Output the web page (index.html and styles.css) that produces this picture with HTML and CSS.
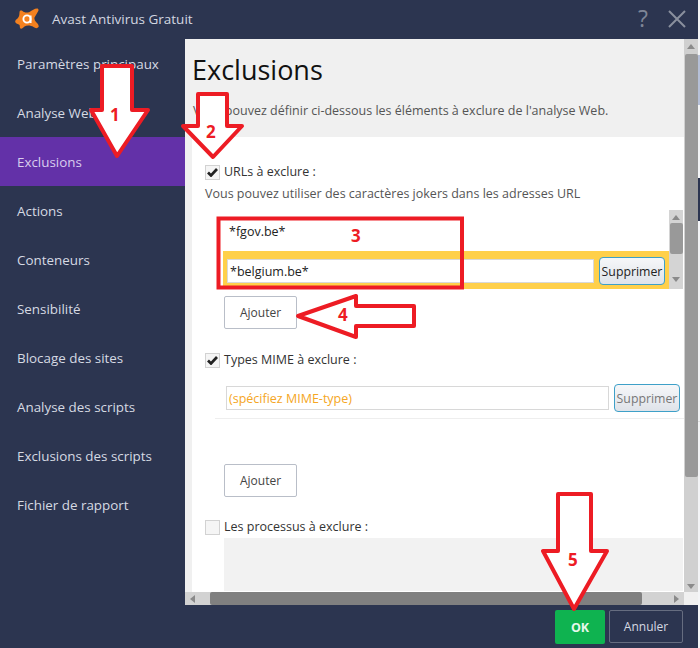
FILE: index.html
```html
<!DOCTYPE html>
<html lang="fr">
<head>
<meta charset="utf-8">
<title>Avast Antivirus Gratuit</title>
<link rel="stylesheet" href="styles.css">
</head>
<body>
<div class="page">
  <div class="app">
    <header class="titlebar">
      <svg class="logo" width="24" height="24" viewBox="0 0 24 24"><path fill="#f4811f" d="M22 1.500C23.500 1.500 24 3 23 4.500L19.500 10.500C19 12 20 14 21.500 15.500C23.500 17.500 24 19 23.500 20C22.500 21.500 20.500 21.500 18.500 20C16 18.500 12 18 9.500 19.500C8 21 6.500 22.500 5.500 21.500C4.500 20.500 5 19 4.500 18C4 17 1.500 17 0.500 15.500C-0.500 14 1 12.500 2.500 11.500C4 10 4.500 8 4.500 5.500C4.500 3.500 6 3 7.500 4C9 5.500 11.500 6 14.500 5C17 3.500 19.500 1.500 22 1.500Z"/><circle cx="12" cy="12" r="3.600" fill="none" stroke="#fff" stroke-width="1.900"/><path d="M15.600 8.500V16" stroke="#fff" stroke-width="1.900"/></svg>
      <span class="apptitle">Avast Antivirus Gratuit</span>
      <span class="help">?</span>
      <svg class="close" width="18" height="18" viewBox="0 0 18 18"><path d="M1 1L17 17M17 1L1 17" stroke="#8a909e" stroke-width="2" fill="none"/></svg>
    </header>
    <div class="body">
      <nav class="sidebar">
        <a class="navitem">Paramètres principaux</a>
        <a class="navitem">Analyse Web</a>
        <a class="navitem active">Exclusions</a>
        <a class="navitem">Actions</a>
        <a class="navitem">Conteneurs</a>
        <a class="navitem">Sensibilité</a>
        <a class="navitem">Blocage des sites</a>
        <a class="navitem">Analyse des scripts</a>
        <a class="navitem">Exclusions des scripts</a>
        <a class="navitem">Fichier de rapport</a>
      </nav>
      <main class="panel">
        <div class="panelrow">
          <div class="view">
            <section class="head">
              <h1>Exclusions</h1>
              <p class="intro">Vous pouvez définir ci-dessous les éléments à exclure de l'analyse Web.</p>
            </section>
            <section class="content">
              <label class="check url"><span class="box on"><svg width="11" height="9" viewBox="0 0 11 9"><path d="M1 4.500L4 7.500L10 1" fill="none" stroke="#222" stroke-width="2.700"/></svg></span>URLs à exclure :</label>
              <p class="hint">Vous pouvez utiliser des caractères jokers dans les adresses URL</p>
              <div class="listbox">
                <div class="rows">
                  <div class="plainrow">*fgov.be*</div>
                  <div class="yellowrow">
                    <div class="field dark">*belgium.be*</div>
                    <button class="remove">Supprimer</button>
                  </div>
                </div>
                <div class="miniscroll">
                  <i class="up"></i>
                  <i class="minithumb"></i>
                  <i class="down"></i>
                </div>
              </div>
              <button class="add first">Ajouter</button>
              <label class="check mime"><span class="box on"><svg width="11" height="9" viewBox="0 0 11 9"><path d="M1 4.500L4 7.500L10 1" fill="none" stroke="#222" stroke-width="2.700"/></svg></span>Types MIME à exclure :</label>
              <div class="mimerow">
                <div class="field orange">(spécifiez MIME-type)</div>
                <button class="remove grey">Supprimer</button>
              </div>
              <div class="rule"></div>
              <button class="add second">Ajouter</button>
              <label class="check proc"><span class="box"></span>Les processus à exclure :</label>
              <div class="greybox"></div>
            </section>
          </div>
          <div class="vscroll">
            <i class="up"></i>
            <i class="vthumb"></i>
            <i class="down end"></i>
          </div>
        </div>
        <div class="hscrollrow">
          <div class="hscroll">
            <i class="left"></i>
            <i class="hthumb"></i>
            <i class="right"></i>
          </div>
          <div class="corner"></div>
        </div>
      </main>
    </div>
    <footer class="footer">
      <button class="ok">OK</button>
      <button class="cancel">Annuler</button>
    </footer>
  </div>
  <div class="strip"><i class="s1"></i><i class="s2"></i><i class="s3"></i></div>
  <svg class="marks" width="700" height="648" viewBox="0 0 700 648">
    <g fill="#fff" stroke="#ed1c24" stroke-width="4" stroke-linejoin="round">
      <path d="M102 66H132V110H148L117 156L91 110H102Z"/>
      <path d="M198 94H227V126H242L213 157L183 126H198Z"/>
      <path d="M298 316L356 296V306H414V326H356V337Z"/>
      <path d="M558 494H591V551H607L574 609L543 551H558Z"/>
    </g>
    <rect x="218.500" y="218.500" width="243.500" height="69" fill="none" stroke="#ed1c24" stroke-width="4"/>
  </svg>
  <span class="num n1">1</span>
  <span class="num n2">2</span>
  <span class="num n3">3</span>
  <span class="num n4">4</span>
  <span class="num n5">5</span>
</div>
</body>
</html>
```
FILE: styles.css
```css
* { box-sizing: border-box; }
html, body { margin: 0; padding: 0; }
body { width: 700px; height: 648px; overflow: hidden; background: #fff; font-family: "Open Sans", "Noto Sans", sans-serif; }
.page { position: relative; display: flex; width: 700px; height: 648px; }
.app { display: flex; flex-direction: column; width: 698px; height: 648px; background: #2c3550; }
.strip { display: flex; flex-direction: column; width: 2px; height: 648px; background: #f4f5f7; }
.strip i { display: block; }
.strip .s1 { height: 50px; margin-top: 55px; background: #b6c0d8; }
.strip .s2 { height: 43px; margin-top: 73px; background: #2c3550; }
.strip .s3 { height: 1px; margin-top: 200px; background: #ddd; }

.titlebar { display: flex; align-items: center; height: 39px; padding: 0 12px 0 15px; flex: none; }
.logo { flex: none; margin-top: -2px; }
.apptitle { margin-left: 13px; color: #d3d7e0; font-size: 13.500px; margin-top: -1px; }
.help { margin-left: auto; color: #7f8697; font-size: 23px; line-height: 1; margin-right: 20px; margin-top: -2px; }
.close { flex: none; margin-top: -1px; }

.body { display: flex; height: 566px; flex: none; }
.sidebar { width: 185px; flex: none; display: flex; flex-direction: column; }
.navitem { display: flex; align-items: center; height: 49px; padding: 0 0 0 17px; color: #d6dae3; font-size: 13.400px; flex: none; }
.navitem.active { background: #6331a8; color: #d9cdee; }

.panel { width: 513px; flex: none; display: flex; flex-direction: column; background: #f0f0f0; }
.panelrow { display: flex; height: 553px; flex: none; overflow: hidden; }
.view { width: 499px; flex: none; display: flex; flex-direction: column; }
.head { height: 98px; flex: none; padding: 12px 0 0 7px; background: #f0f0f0; }
h1 { margin: 0; font-size: 27px; font-weight: 400; line-height: 38px; color: #111; }
.intro { margin: 13px 0 0 1px; font-size: 12.500px; line-height: 18px; color: #555; }

.content { flex: 1; margin-left: 7px; background: #fff; display: flex; flex-direction: column; align-items: flex-start; padding-left: 13px; }
.check { display: flex; align-items: center; font-size: 12.500px; color: #333; line-height: 16px; }
.box { display: flex; align-items: center; justify-content: center; width: 15px; height: 15px; margin-right: 4px; background: #f5f5f5; border: 1px solid #d2d2d2; flex: none; }
.url { margin-top: 27px; }
.hint { margin: 5px 0 0 0; font-size: 12.500px; line-height: 18px; color: #555; }
.listbox { display: flex; width: 460px; height: 79px; margin: 7px 0 0 18px; flex: none; }
.rows { width: 446px; flex: none; }
.plainrow { height: 41px; padding: 13px 0 0 6px; font-size: 12.500px; line-height: 18px; color: #222; }
.yellowrow { display: flex; align-items: center; height: 38px; padding: 2px 4px 0 4px; background: #ffd04a; }
.field { display: flex; align-items: center; background: #fff; border: 1px solid #d8d8d8; font-size: 12.500px; padding-left: 2px; }
.field.dark { width: 367px; height: 24px; color: #222; }
.field.orange { width: 383px; height: 24px; color: #f5a623; }
.remove { width: 66px; height: 28px; margin-left: 5px; padding: 0; border: 1px solid #3ea0c8; border-radius: 4px; background: linear-gradient(#f6f7f9, #dfe3e9); font-family: inherit; font-size: 12.300px; color: #222; flex: none; }
.remove.grey { color: #777; }
.miniscroll { width: 14px; height: 79px; flex: none; background: #d4d4d4; display: flex; flex-direction: column; align-items: center; }
.miniscroll .minithumb { display: block; width: 13px; height: 31px; margin-top: 3px; background: #999; border-radius: 2px; }
.up { display: block; width: 0; height: 0; margin-top: 5px; border-left: 4.500px solid transparent; border-right: 4.500px solid transparent; border-bottom: 5px solid #8a8a8a; }
.down { display: block; width: 0; height: 0; margin-top: 23px; border-left: 4.500px solid transparent; border-right: 4.500px solid transparent; border-top: 5px solid #8a8a8a; }
.add { width: 73px; height: 33px; padding: 0; background: #fff; border: 1px solid #b9bec8; border-radius: 2px; font-family: inherit; font-size: 12px; color: #444; flex: none; }
.add.first { margin: 7px 0 0 19px; }
.mime { margin-top: 23px; }
.mimerow { display: flex; align-items: center; margin: 16px 0 0 21px; height: 28px; flex: none; }
.rule { width: 476px; height: 1px; margin: 6px 0 0 10px; background: #eee; flex: none; }
.add.second { margin: 45px 0 0 19px; }
.proc { margin-top: 22px; }
.greybox { width: 459px; height: 53px; margin: 3px 0 0 19px; background: #f2f2f2; flex: none; }

.vscroll { width: 14px; flex: none; background: #d0d0d0; display: flex; flex-direction: column; align-items: center; }
.vthumb { display: block; width: 13px; height: 423px; margin-top: 5px; background: #999; border-radius: 2px; }
.down.end { margin-top: 107px; }

.hscrollrow { display: flex; height: 13px; flex: none; }
.hscroll { width: 499px; display: flex; align-items: center; background: #d2d2d2; flex: none; }
.left { display: block; width: 0; height: 0; margin-left: 5px; border-top: 4.500px solid transparent; border-bottom: 4.500px solid transparent; border-right: 5px solid #8a8a8a; }
.hthumb { display: block; width: 432px; height: 13px; margin-left: 15px; background: #808080; border-radius: 2px; }
.right { display: block; width: 0; height: 0; margin-left: 32px; border-top: 4.500px solid transparent; border-bottom: 4.500px solid transparent; border-left: 5px solid #8a8a8a; }
.corner { width: 14px; background: #f0f0f0; }

.footer { display: flex; justify-content: flex-end; align-items: flex-start; height: 43px; padding: 5px 15px 0 0; flex: none; }
.ok { width: 50px; height: 34px; padding: 0; background: #0fb350; border: 0; border-radius: 2px; color: #e6f8ec; font-family: inherit; font-weight: 700; font-size: 12.500px; }
.cancel { width: 74px; height: 33px; margin-left: 4px; padding: 0; background: transparent; border: 1px solid #666d80; border-radius: 2px; color: #d6dae3; font-family: inherit; font-size: 12px; }

.marks { position: absolute; left: 0; top: 0; pointer-events: none; }
.num { position: absolute; color: #ed1c24; font-weight: 700; font-size: 17px; line-height: 20px; }
.n1 { left: 110px; top: 105px; }
.n2 { left: 206px; top: 122px; }
.n3 { left: 351px; top: 226px; }
.n4 { left: 338px; top: 305px; }
.n5 { left: 568px; top: 550px; }
```
